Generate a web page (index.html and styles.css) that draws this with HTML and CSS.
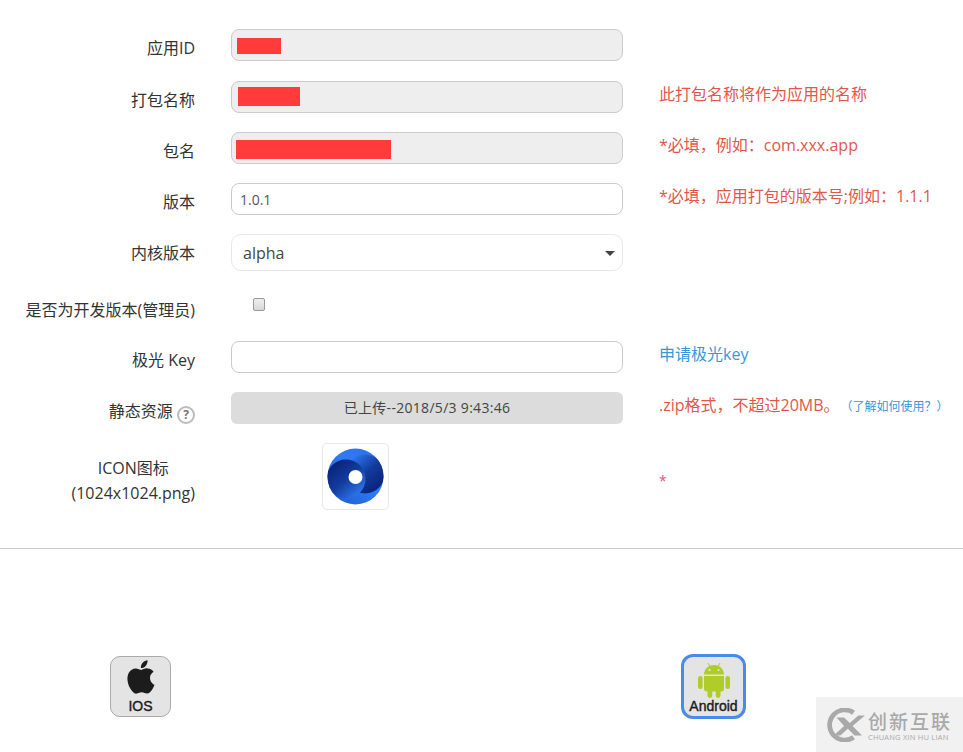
FILE: index.html
```html
<!DOCTYPE html>
<html>
<head>
  <title>打包</title>
  <meta charset="utf-8">
  <link rel="stylesheet" href="styles.css">
</head>
<body>
  <form class="form">
    <div class="row row-wide">
      <label class="label">应用ID</label>
      <div class="input input-off"><span class="mask mask-id"></span></div>
    </div>
    <div class="row">
      <label class="label">打包名称</label>
      <div class="input input-off"><span class="mask mask-name"></span></div>
      <div class="hint">此打包名称将作为应用的名称</div>
    </div>
    <div class="row">
      <label class="label">包名</label>
      <div class="input input-off"><span class="mask mask-pkg"></span></div>
      <div class="hint">*必填，例如：com.xxx.app</div>
    </div>
    <div class="row">
      <label class="label">版本</label>
      <input class="input" type="text" value="1.0.1">
      <div class="hint">*必填，应用打包的版本号;例如：1.1.1</div>
    </div>
    <div class="row row-wide">
      <label class="label">内核版本</label>
      <div class="select">alpha</div>
    </div>
    <div class="row row-check">
      <label class="label">是否为开发版本(管理员)</label>
      <div class="check-wrap"><input class="check" type="checkbox"></div>
    </div>
    <div class="row">
      <label class="label">极光 Key</label>
      <input class="input" type="text">
      <div class="hint"><a class="link" href="#">申请极光key</a></div>
    </div>
    <div class="row">
      <label class="label">静态资源 <span class="help">?</span></label>
      <div class="upload">已上传--2018/5/3 9:43:46</div>
      <div class="hint"><span class="hint-zip">.zip格式，不超过20MB。</span><a class="link link-small" href="#">（了解如何使用？）</a></div>
    </div>
    <div class="row row-icon">
      <label class="label label-icon"><span class="label-block">ICON图标<br>(1024x1024.png)</span></label>
      <div class="thumb">
        <svg width="57" height="57" viewBox="0 0 57 57">
          <defs>
            <linearGradient id="ringBlue" x1="0" y1="1" x2="1" y2="0">
              <stop offset="0" stop-color="#1d55c8"/>
              <stop offset="0.55" stop-color="#2f7bf6"/>
              <stop offset="1" stop-color="#2a6fe8"/>
            </linearGradient>
            <linearGradient id="leftDark" x1="0.05" y1="0.15" x2="0.8" y2="1">
              <stop offset="0" stop-color="#0a1f78"/>
              <stop offset="0.5" stop-color="#133c9c"/>
              <stop offset="1" stop-color="#2f7bf6"/>
            </linearGradient>
            <linearGradient id="rightDark" x1="0.2" y1="0" x2="0.95" y2="0.85">
              <stop offset="0" stop-color="#2f7bf6"/>
              <stop offset="0.5" stop-color="#133c9c"/>
              <stop offset="1" stop-color="#0a1f78"/>
            </linearGradient>
            <clipPath id="ringClip"><circle cx="28.5" cy="28.5" r="28"/></clipPath>
          </defs>
          <circle cx="28.5" cy="28.5" r="28" fill="url(#ringBlue)"/>
          <g clip-path="url(#ringClip)">
            <circle cx="38" cy="26" r="19.500" fill="url(#rightDark)"/>
            <circle cx="19" cy="31" r="19.500" fill="url(#leftDark)"/>
          </g>
          <circle cx="28.500" cy="29" r="7" fill="#fff"/>
        </svg>
      </div>
      <div class="hint hint-star">*</div>
    </div>
  </form>

  <hr class="line">

  <div class="platforms">
    <div class="platform platform-ios">
      <svg width="40" height="40" viewBox="0 0 24 24">
        <path fill="#1c1c1c" d="M18.71,19.5C17.88,20.74 17,21.95 15.66,21.97C14.32,22 13.89,21.18 12.37,21.18C10.84,21.18 10.37,21.95 9.1,22C7.79,22.05 6.8,20.68 5.96,19.47C4.25,17 2.94,12.45 4.7,9.39C5.57,7.87 7.13,6.91 8.82,6.88C10.1,6.86 11.32,7.75 12.11,7.75C12.89,7.75 14.37,6.68 15.92,6.84C16.57,6.87 18.39,7.1 19.56,8.82C19.47,8.88 17.39,10.1 17.41,12.63C17.44,15.65 20.06,16.66 20.09,16.67C20.06,16.74 19.67,18.11 18.71,19.5M13,3.5C13.73,2.67 14.94,2.04 15.94,2C16.07,3.17 15.6,4.35 14.9,5.19C14.21,6.04 13.07,6.7 11.95,6.61C11.8,5.46 12.36,4.26 13,3.5Z"/>
      </svg>
      <span class="platform-name">IOS</span>
    </div>
    <div class="platform platform-android">
      <svg width="32" height="36" viewBox="0 0 32 36">
        <g fill="#b0cc28">
          <path d="M6 12.500C6 7 10.500 3 16 3C21.500 3 26 7 26 12.500Z"/>
          <path d="M6 14H26V27C26 28.500 25 29.500 23.500 29.500H8.500C7 29.500 6 28.500 6 27Z"/>
          <rect x="0" y="14" width="4.600" height="13" rx="2.300"/>
          <rect x="27.400" y="14" width="4.600" height="13" rx="2.300"/>
          <rect x="9.500" y="27" width="4.800" height="9" rx="2.400"/>
          <rect x="17.700" y="27" width="4.800" height="9" rx="2.400"/>
          <path d="M10 1L12 4.500M22 1L20 4.500" stroke="#b0cc28" stroke-width="1"/>
        </g>
        <circle cx="11.500" cy="8" r="1.100" fill="#e4e4e4"/>
        <circle cx="20.500" cy="8" r="1.100" fill="#e4e4e4"/>
      </svg>
      <span class="platform-name">Android</span>
    </div>
  </div>

  <div class="watermark">
    <svg width="38" height="34" viewBox="0 0 40 36">
      <path d="M28 5A16 16 0 1 0 28 31" fill="none" stroke="#a9a9a9" stroke-width="5"/>
      <path d="M10 10H18L24 16L33 8H40L27 19L37 29H29L22 22L14 29H7L18 19Z" fill="#a9a9a9"/>
    </svg>
    <div class="watermark-text">
      <div class="watermark-cn">创新互联</div>
      <div class="watermark-en">CHUANG XIN HU LIAN</div>
    </div>
  </div>
</body>
</html>
```

FILE: styles.css
```css
html, body {
  margin: 0;
  padding: 0;
  height: 752px;
  overflow: hidden;
  background: #fff;
  font-family: "Open Sans", "Noto Sans CJK SC", sans-serif;
  font-size: 16px;
  color: #333;
}
.form {
  display: flex;
  flex-direction: column;
  padding-top: 29px;
}
.row {
  display: grid;
  grid-template-columns: 195px 392px 1fr;
  column-gap: 36px;
  align-items: start;
  margin-bottom: 19px;
}
.row-wide {
  margin-bottom: 20px;
}
.row-check {
  height: 30px;
  margin-bottom: 20px;
}
.label {
  padding-top: 7px;
  line-height: 25px;
  text-align: right;
  white-space: nowrap;
}
.label-icon {
  padding-top: 13px;
}
.label-block {
  display: inline-block;
  text-align: center;
}
.input {
  box-sizing: border-box;
  display: block;
  width: 392px;
  height: 32px;
  margin: 0;
  padding: 0 8px;
  border: 1px solid #ccc;
  border-radius: 8px;
  background: #fff;
  font-family: inherit;
  font-size: 14px;
  color: #555;
  outline: none;
}
.input-off {
  position: relative;
  background: #eee;
}
.mask {
  position: absolute;
  background: #ff3b3b;
}
.mask-id { left: 5px; top: 8px; width: 44px; height: 16px; }
.mask-name { left: 6px; top: 5px; width: 62px; height: 19px; }
.mask-pkg { left: 4px; top: 7px; width: 155px; height: 19px; }
.select {
  position: relative;
  box-sizing: border-box;
  width: 392px;
  height: 37px;
  padding-left: 11px;
  border: 1px solid #e8e8e8;
  border-radius: 10px;
  line-height: 36px;
  font-size: 16px;
  color: #444;
}
.select::after {
  content: "";
  position: absolute;
  right: 7px;
  top: 16px;
  border-left: 5px solid transparent;
  border-right: 5px solid transparent;
  border-top: 5px solid #444;
}
.check-wrap {
  padding: 7px 0 0 22px;
}
.check {
  appearance: none;
  display: block;
  box-sizing: border-box;
  width: 12px;
  height: 13px;
  margin: 0;
  border: 1px solid #999;
  border-radius: 2px;
  background: linear-gradient(#eee, #d8d8d8);
}
.upload {
  height: 32px;
  border-radius: 6px;
  background: #dcdcdc;
  line-height: 32px;
  font-size: 14px;
  letter-spacing: 0.3px;
  color: #444;
  text-align: center;
}
.hint {
  line-height: 26px;
  color: #e2574c;
  white-space: nowrap;
}
.hint-zip {
  margin-right: 7px;
}
.hint-star {
  padding-top: 25px;
  font-size: 14px;
  color: #d9567a;
}
.link {
  color: #3a96d8;
  text-decoration: none;
}
.link-small {
  font-size: 12px;
}
.help {
  display: inline-block;
  box-sizing: border-box;
  width: 18px;
  height: 18px;
  border: 2px solid #bbb;
  border-radius: 50%;
  line-height: 14px;
  font-size: 12px;
  font-weight: 700;
  color: #777;
  text-align: center;
  vertical-align: -2px;
}
.row-icon {
  margin-bottom: 38px;
}
.thumb {
  box-sizing: border-box;
  display: flex;
  align-items: center;
  justify-content: center;
  width: 67px;
  height: 67px;
  margin-left: 91px;
  border: 1px solid #e8e8e8;
  border-radius: 5px;
}
.line {
  height: 1px;
  margin: 0;
  border: 0;
  background: #ccc;
}
.platforms {
  display: flex;
  align-items: flex-start;
  padding: 105px 0 0 110px;
}
.platform {
  box-sizing: border-box;
  display: flex;
  flex-direction: column;
  align-items: center;
  background: #e4e4e4;
  font-family: "Liberation Sans", Arial, sans-serif;
  color: #1c1c1c;
  -webkit-text-stroke: 0.4px #1c1c1c;
}
.platform-ios {
  width: 61px;
  height: 61px;
  margin-top: 2px;
  border: 1px solid #aaa;
  border-radius: 10px;
}
.platform-android {
  width: 65px;
  height: 65px;
  margin-left: 510px;
  padding-top: 5px;
  border: 3px solid #4a8ae8;
  border-radius: 12px;
}
.platform-name {
  font-size: 14px;
  line-height: 16px;
}
.platform-ios .platform-name {
  margin-top: 1px;
}
.watermark {
  position: absolute;
  right: 0;
  bottom: 0;
  display: flex;
  align-items: center;
  gap: 3px;
  box-sizing: border-box;
  width: 147px;
  height: 55px;
  padding-left: 11px;
  background: rgba(240, 240, 240, 0.9);
  color: #a9a9a9;
}
.watermark-text {
  padding-top: 4px;
}
.watermark-cn {
  font-size: 19px;
  line-height: 21px;
  font-weight: 500;
  letter-spacing: 2px;
}
.watermark-en {
  font-size: 7.500px;
  line-height: 9px;
  letter-spacing: 0.2px;
  white-space: nowrap;
}
```
